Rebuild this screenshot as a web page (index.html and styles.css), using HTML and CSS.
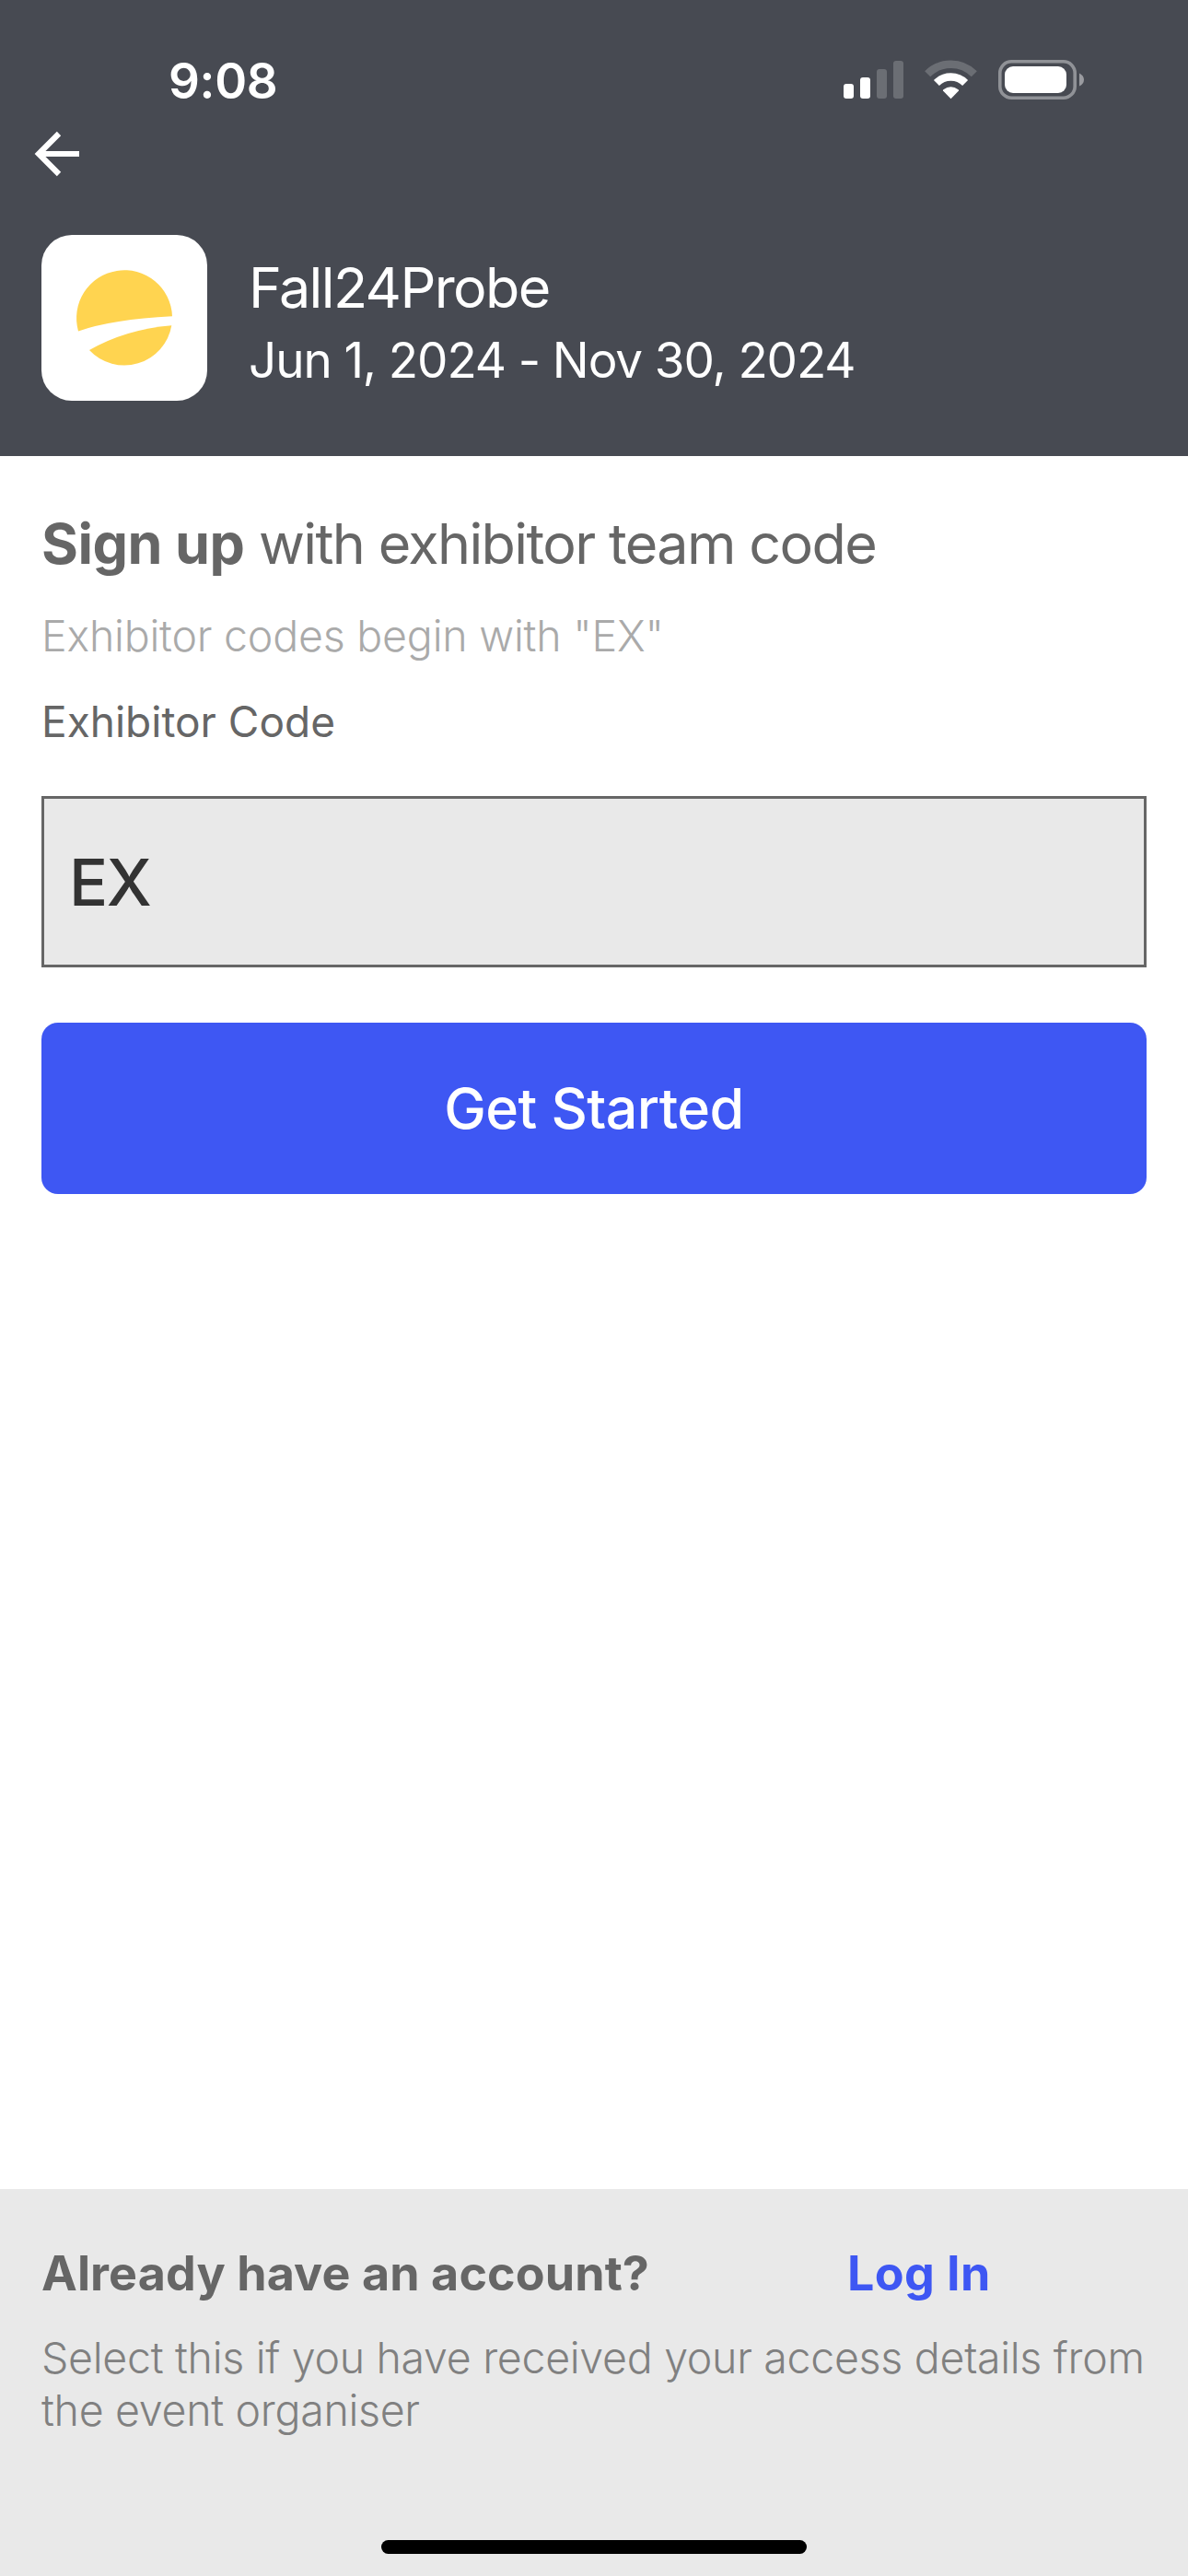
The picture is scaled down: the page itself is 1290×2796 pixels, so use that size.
FILE: index.html
```html
<!DOCTYPE html>
<html lang="en">

<head>
    <meta charset="UTF-8">
    <meta name="viewport" content="width=device-width, initial-scale=1.0">
    <title>Sign up</title>
    <link rel="stylesheet" href="styles.css">
</head>

<body>
    <div class="container">
        <header class="header">
            <div class="status-bar">
                <span class="time">9:08</span>
                <div class="status-icons">
                    <svg class="signal" width="65" height="43" viewBox="0 0 65 43" fill="#fff">
                        <rect x="0" y="26" width="11" height="16" rx="3"/>
                        <rect x="18" y="19" width="11" height="23" rx="3"/>
                        <rect x="36" y="10" width="11" height="32" rx="3" opacity="0.2"/>
                        <rect x="54" y="1" width="11" height="41" rx="3" opacity="0.2"/>
                    </svg>
                    <svg class="wifi" width="58" height="43" viewBox="0 0 58 43" fill="none" stroke="#fff">
                        <path d="M3.2 15.3A35.7 35.7 0 0 1 53.8 15.3" stroke-width="8.6" opacity="0.2"/>
                        <path d="M12.9 25A22 22 0 0 1 44.1 25" stroke-width="8.4"/>
                        <path d="M28.5 42.2L20 33.6Q19.6 33 20.4 32.3Q28.5 26 36.6 32.3Q37.4 33 37 33.6Z" fill="#fff" stroke="none"/>
                    </svg>
                    <svg class="battery" width="94" height="43" viewBox="0 0 94 43">
                        <rect x="1.8" y="1.8" width="81.4" height="39.4" rx="12.5" fill="none" stroke="#fff" stroke-width="3.6" opacity="0.4"/>
                        <rect x="7" y="7" width="67" height="29" rx="9" fill="#fff"/>
                        <path d="M88 14.5Q93 17 93 21.5Q93 26 88 28.5Z" fill="#fff" opacity="0.45"/>
                    </svg>
                </div>
            </div>
            <a href="#" class="back">
                <svg width="50" height="50" viewBox="0 0 50 50" fill="none" stroke="#fff" stroke-width="6.2">
                    <path d="M27 3L5 25L27 47M5.5 25H49"/>
                </svg>
            </a>
            <div class="event">
                <div class="logo">
                    <svg width="180" height="180" viewBox="0 0 180 180" fill="#ffd450">
                        <path d="M40 104.4A52 52 0 1 1 142 88.2Q77 91.500 40 104.4Z"/>
                        <path d="M52 125A52 52 0 0 0 141.300 98.200Q91 102.500 52 125Z"/>
                    </svg>
                </div>
                <div class="event-info">
                    <h1>Fall24Probe</h1>
                    <p>Jun 1, 2024 - Nov 30, 2024</p>
                </div>
            </div>
        </header>

        <main class="main">
            <h2><b>Sign up</b> <span>with exhibitor team code</span></h2>
            <p class="hint">Exhibitor codes begin with "EX"</p>
            <form id="signup-form">
                <label for="code">Exhibitor Code</label>
                <input type="text" name="code" id="code" value="EX">
                <button type="submit">Get Started</button>
            </form>
        </main>

        <footer class="footer">
            <div class="login">
                <h3>Already have an account?</h3>
                <a href="#" class="link">Log In</a>
            </div>
            <p>Select this if you have received your access details from the event organiser</p>
            <div class="home-bar"></div>
        </footer>
    </div>
</body>

</html>
```
FILE: styles.css
```css
*{
    box-sizing: border-box;
    padding: 0;
    margin: 0;
}

body{
    font-family: Inter, "Liberation Sans", sans-serif;
    background-color: #fff;
    color: #666;
}

svg{
    display: block;
}

.container{
    display: flex;
    flex-direction: column;
    height: 100vh;
    min-height: 2796px;
}

.header{
    height: 495px;
    background-color: #474a52;
    color: #fff;
}

.status-bar{
    display: flex;
    justify-content: space-between;
    height: 142px;
    padding: 57px 112px 0 183px;
}

.time{
    font-size: 53px;
    font-weight: 600;
    line-height: 62px;
    letter-spacing: -0.3px;
}

.status-icons{
    display: flex;
    padding-top: 8px;
}

.wifi{
    margin-left: 23px;
}

.battery{
    margin-left: 22px;
}

.back{
    display: block;
    width: 50px;
    margin-left: 37px;
}

.event{
    display: flex;
    gap: 45px;
    padding: 63px 45px 0;
}

.logo{
    width: 180px;
    height: 180px;
    border-radius: 33px;
    background-color: #fff;
}

.event-info{
    padding-top: 21px;
}

.event-info h1{
    font-size: 61px;
    font-weight: 400;
    line-height: 72px;
    letter-spacing: -1.6px;
}

.event-info p{
    margin-top: 4px;
    font-size: 53px;
    line-height: 78px;
    letter-spacing: -1.1px;
}

.main{
    flex: 1;
    padding: 55px 45px 0;
}

.main h2{
    font-size: 61px;
    font-weight: 400;
    line-height: 80px;
    letter-spacing: -1.62px;
    white-space: nowrap;
}

.main h2 b{
    letter-spacing: -0.5px;
}

.hint{
    margin-top: 30px;
    font-size: 46.5px;
    font-weight: 300;
    line-height: 60px;
    letter-spacing: -0.22px;
    color: #aaa;
}

form{
    display: flex;
    flex-direction: column;
}

form label{
    margin-top: 33px;
    font-size: 46px;
    line-height: 60px;
}

form input{
    height: 186px;
    margin-top: 51px;
    padding: 0 27px;
    border: 3px solid #666;
    background-color: #e9e9e9;
    font-family: inherit;
    font-size: 70px;
    font-weight: 500;
    letter-spacing: -1.5px;
    color: #333;
    outline: none;
}

form button{
    height: 186px;
    margin-top: 60px;
    border: none;
    border-radius: 18px;
    background-color: #3e57f3;
    font-family: inherit;
    font-size: 61px;
    font-weight: 500;
    letter-spacing: -0.6px;
    color: #fff;
}

.footer{
    height: 420px;
    padding: 57px 45px 0;
    background-color: #e9e9e9;
}

.login{
    display: flex;
    line-height: 70px;
}

.login h3{
    width: 875px;
    font-size: 52px;
    font-weight: 700;
    letter-spacing: 0.1px;
}

.link{
    font-size: 52px;
    font-weight: 700;
    letter-spacing: 0.4px;
    text-decoration: none;
    color: #3e57f3;
}

.footer p{
    margin-top: 28px;
    margin-right: -20px;
    font-size: 46.5px;
    font-weight: 300;
    line-height: 57px;
    letter-spacing: -0.3px;
    color: #808080;
}

.home-bar{
    width: 462px;
    height: 15px;
    margin: 112px auto 0;
    border-radius: 8px;
    background-color: #000;
}
```
